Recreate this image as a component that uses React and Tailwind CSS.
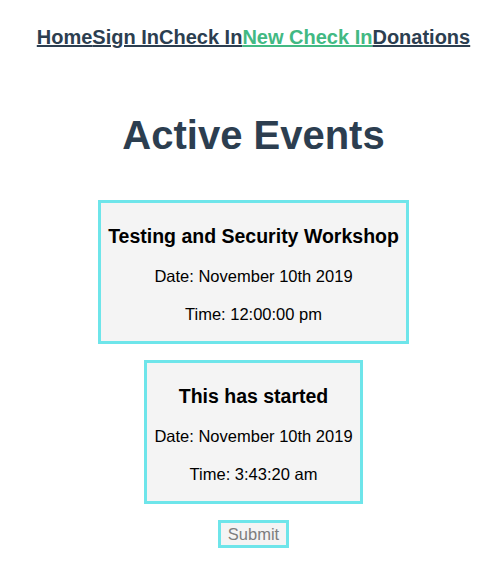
const navLinks = [
  { label: 'Home' },
  { label: 'Sign In' },
  { label: 'Check In' },
  { label: 'New Check In', active: true },
  { label: 'Donations' },
]

const events = [
  { title: 'Testing and Security Workshop', date: 'November 10th 2019', time: '12:00:00 pm' },
  { title: 'This has started', date: 'November 10th 2019', time: '3:43:20 am' },
]

function EventCard({ event }) {
  return (
    <div className="border-[3px] border-[#6ee5ea] bg-[#f4f4f4] px-[7px] pt-[22px] pb-[17px] text-center text-black">
      <h3 className="text-[19.5px] font-bold leading-[22px]">{event.title}</h3>
      <p className="mt-[20px] text-[16.5px] leading-[19px]">Date: {event.date}</p>
      <p className="mt-[19px] text-[16.5px] leading-[19px]">Time: {event.time}</p>
    </div>
  )
}

export default function App() {
  return (
    <div className="min-h-[586px] bg-white pl-[10px] text-[#2c3e50]" style={{ fontFamily: '"Liberation Sans", Arial, sans-serif' }}>
      <nav className="flex justify-center pt-[26px] text-[20px] font-bold leading-[23px]">
        {navLinks.map((link) => (
          <a className={link.active ? 'text-[#42b983] underline' : 'text-[#2c3e50] underline'} href="#" key={link.label}>
            {link.label}
          </a>
        ))}
      </nav>

      <h1 className="mt-[63px] text-center text-[40px] font-bold leading-[46px]">Active Events</h1>

      <div className="mt-[42px] flex flex-col items-center gap-[16px]">
        {events.map((event) => <EventCard event={event} key={event.title} />)}
        <button className="h-[28px] border-[3px] border-[#6ee5ea] bg-[#f4f4f4] px-[7px] text-[16.5px] leading-[19px] text-[#7d7d7d]" type="button">
          Submit
        </button>
      </div>
    </div>
  )
}
